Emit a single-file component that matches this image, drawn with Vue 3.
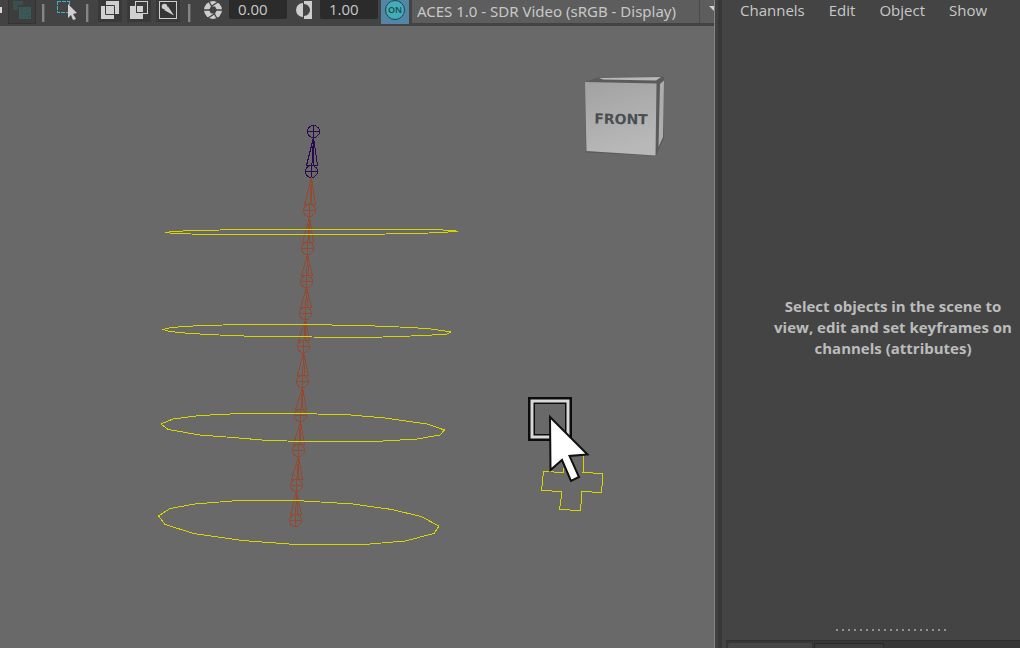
<script setup>
import { ref } from 'vue'

const exposure = ref('0.00')
const gamma = ref('1.00')
const view = ref('ACES 1.0 - SDR Video (sRGB - Display)')
const menus = ['Channels', 'Edit', 'Object', 'Show']

const joints = [
  [313.5, 131.5], [311.5, 171.5], [309.5, 210.5], [307.5, 248.5], [306.5, 281.5], [305.5, 313.5],
  [303.5, 346.5], [302.5, 381.5], [300.5, 415.5], [298.5, 450.5], [296.5, 485.5], [295.5, 520.5],
]

const jointPath = ([x, y]) =>
  `M${x - 6} ${y}a6 6 0 1 0 12 0a6 6 0 1 0 -12 0M${x - 6} ${y}H${x + 6}M${x} ${y - 6}V${y + 6}`

const bonePath = (i) => {
  const [x, y] = joints[i]
  const [tx, ty] = joints[i - 1]
  const base = y - 6
  const tip = `${tx} ${ty + 6}`
  return `M${tip}L${x - 5} ${base}H${x + 6}ZM${tip}L${x} ${y}M${tip}L${x + 2} ${base}`
}

const shapes = joints.map((j, i) => ({
  d: jointPath(j) + (i ? bonePath(i) : ''),
  end: i < 2,
}))

const rings = [
  '166,232.5 173,231.5 194,230.5 246,229.5 431,229.5 454,230.5 458,231.5 419,233.5 353,234.5 209,234.5 173,233.5',
  '163,329.5 171,327.5 200,325.5 246,324.5 304,324.5 359,325.5 390,326.5 427,328.5 442,330.5 451,332 447,334 432,335 400,336.5 366,337.5 258,336.5 229,335.5 190,333.5 170,331.5',
  '161,424 173,419 200,415.5 240,413.5 300,413.5 351,415 385,418 427,424 444.5,430 440,435 417,439 383,441 360,442 300,441.5 262,440 233,437.5 200,435 168,429.5',
  '158.5,516 170,508.5 195,504 238,500.5 296,500.5 353,504 392,509.5 421,516.5 439,526 434,533.5 405,541 364,544.5 296,544.5 242,540.5 194,533.5 165,524.5',
]
</script>

<template>
  <main class="app">
    <section class="viewport">
      <header class="toolbar">
        <span class="nub"></span>
        <button class="tool wide" aria-label="Wireframe shading">
          <svg width="28" height="24" viewBox="0 0 28 24">
            <path d="M5 1h10v4h-5v5H5z" fill="#3b4f4e" />
            <rect x="11" y="7" width="12" height="12" fill="#3c5959" />
            <path d="M13 9h1M17 10h1M20 9h1M14 13h1M18 14h1M21 13h1M13 17h1M17 17h1M20 17h1" stroke="#304544" />
          </svg>
        </button>
        <i class="sep first"></i>
        <button class="tool plain" aria-label="Isolate select">
          <svg width="24" height="22" viewBox="0 0 24 22">
            <path d="M3 1.500H15.500M3.500 1V12.500H14M15.500 1V5" fill="none" stroke="#3fb3c4" stroke-dasharray="4 1" />
            <path d="M14 4l9 9-4 1 3 5-3 1-2-5-3 3z" fill="#cfcfcf" />
          </svg>
        </button>
        <i class="sep"></i>
        <div class="group">
          <button class="tool" aria-label="X-ray">
            <svg width="24" height="22" viewBox="0 0 24 22">
              <path d="M8 1h13v13H8zM3 6h13v13H3z" fill="#d0d0d0" />
              <path d="M7.500 1V5.500H3M7.500 5.500H16.500V14.500H7.500zM16.500 14.500V19" fill="none" stroke="#3b3b3b" />
            </svg>
          </button>
          <button class="tool" aria-label="X-ray joints">
            <svg width="24" height="22" viewBox="0 0 24 22">
              <path d="M3 6h13v13H3z" fill="#d0d0d0" />
              <rect x="8.500" y="1.500" width="12" height="12" fill="#3b3b3b" stroke="#d0d0d0" />
              <rect x="10" y="6" width="6" height="6" fill="#d0d0d0" />
            </svg>
          </button>
          <button class="tool" aria-label="X-ray active components">
            <svg width="24" height="22" viewBox="0 0 24 22">
              <rect x="3.500" y="1.500" width="17" height="17" fill="#353535" stroke="#cdcdcd" />
              <circle cx="8.500" cy="6.500" r="2.800" fill="#cdcdcd" />
              <path d="M8 10L12 6.500 18 15.500z" fill="#cdcdcd" />
            </svg>
          </button>
        </div>
        <i class="sep"></i>
        <label class="ico" for="exposure">
          <svg width="20" height="20" viewBox="0 0 20 20" role="img" aria-label="Exposure">
            <circle cx="10" cy="10" r="9" fill="#cdcdcd" />
            <path d="M8 6.500L12 6.500L14 10L12 13.500L8 13.500L6 10z" fill="#414141" />
            <path d="M6 1.500L9 7M15 2L8 6.500M19 10H13M14 18.500L11 13M5 18L12 13.500M1 10H7" stroke="#414141" stroke-width="1.300" />
          </svg>
        </label>
        <input id="exposure" v-model="exposure" class="num" />
        <label class="ico gam" for="gamma">
          <svg width="20" height="20" viewBox="0 0 20 20" role="img" aria-label="Gamma">
            <path d="M10 1h8v18h-8v-3a6 6 0 0 0 0-12z" fill="#cdcdcd" />
            <path d="M9 3a7 7 0 0 0 0 14z" fill="#cdcdcd" />
          </svg>
        </label>
        <input id="gamma" v-model="gamma" class="num" />
        <button class="on" aria-label="Color management on"><span>ON</span></button>
        <div class="picker">
          <select v-model="view" aria-label="View transform">
            <option>ACES 1.0 - SDR Video (sRGB - Display)</option>
          </select>
          <svg class="caret" width="15" height="23" viewBox="0 0 15 23" aria-hidden="true">
            <path d="M.5 0V23" stroke="#4a4a4a" />
            <path d="M10 6h10l-5 5z" fill="#d0d0d0" />
          </svg>
        </div>
      </header>

      <svg class="scene" viewBox="0 26 714 622" preserveAspectRatio="xMidYMid slice">
        <defs>
          <linearGradient id="face" x1="0" y1="0" x2="0.3" y2="1">
            <stop offset="0" stop-color="#a2a2a2" />
            <stop offset="1" stop-color="#b8b8b8" />
          </linearGradient>
        </defs>
        <g class="wire bones">
          <path v-for="(s, i) in shapes" :key="i" :d="s.d" :class="{ end: s.end }" />
        </g>
        <g class="wire curves">
          <polygon v-for="(r, i) in rings" :key="i" :points="r" />
          <path d="M563.500 468V472.500L543.500 471.500L541.500 490.500L562 491.500L559.500 509.500L580.500 510.500L582 491.500L601.500 492.500L603 473.500L583 472.500L584 456" />
        </g>
        <g class="cube">
          <path d="M585 82L598 77.500L664 76.500V138L656 156L586 152.500z" fill="#5b5b5b" />
          <path d="M599 78L661 77L656 80.500L603 79.500z" fill="#b9b9b9" />
          <path d="M660 84L664 80.500L663 137L658.500 147z" fill="#adadad" />
          <path d="M585 82L656.500 83.500L655.500 155.500L586.500 151z" fill="url(#face)" />
          <text x="621" y="124" text-anchor="middle" transform="rotate(1 621 120)">FRONT</text>
        </g>
        <g class="pointer">
          <rect x="531.5" y="400.5" width="37" height="37" fill="none" stroke="#0c0c0c" stroke-width="7" />
          <rect x="532" y="401" width="36" height="36" fill="none" stroke="#d9d9d9" stroke-width="3" />
          <path d="M550 417L587.500 454.500L569.500 456L579 477L571 481L562 460L550.500 470z" fill="#fff" stroke="#111" stroke-width="2" />
        </g>
      </svg>
    </section>

    <div class="divider"></div>

    <aside class="panel">
      <nav class="menu">
        <button v-for="m in menus" :key="m">{{ m }}</button>
      </nav>
      <p class="hint">Select objects in the scene to<br />view, edit and set keyframes on<br />channels (attributes)</p>
      <div class="grip"><i v-for="n in 19" :key="n"></i></div>
      <div class="tabs"><span class="tab active"></span><span class="tab"></span></div>
    </aside>
  </main>
</template>

<style>
html, body { background: #444; }
</style>

<style scoped>
* { box-sizing: border-box; }
.app {
  display: grid;
  grid-template-columns: minmax(0, 1fr) 8px 298px;
  height: 100vh;
  overflow: hidden;
  background: #444;
  color: #c8c8c8;
  font: 15px/20px "Open Sans", "Noto Sans", sans-serif;
}
button, input, select { font: inherit; color: inherit; border: 0; margin: 0; padding: 0; background: none; }
svg { display: block; }
.viewport { display: flex; flex-direction: column; min-width: 0; min-height: 0; }
.toolbar { display: flex; align-items: flex-start; height: 26px; background: #434343; flex: none; overflow: hidden; }
.nub { width: 2px; height: 6px; margin: 7px 6px 0 0; background: #d6d6d6; flex: none; }
.tool { width: 24px; height: 22px; background: #393939; flex: none; }
.tool.wide { width: 28px; height: 24px; background: #3d3d3d; border: 1px solid #343434; border-top: 0; }
.tool.wide svg { margin-left: -1px; }
.tool.plain { background: none; }
.sep { width: 3px; height: 18px; margin: 4px 9px 0; background: #858585; flex: none; border-right: 1px solid #5c5c5c; }
.sep.first { margin: 4px 9px 0 6px; }
.sep + .tool.plain { margin-right: -1px; }
.group { display: flex; gap: 5px; flex: none; }
.group + .sep { margin-left: 8px; }
.sep + .ico { margin-left: 3px; }
.ico { width: 26px; flex: none; }
.ico.gam { width: 26px; margin-left: 7px; }
.num { width: 58px; height: 19px; padding-left: 9px; background: #2b2b2b; border-radius: 0 0 2px 2px; line-height: 19px; flex: none; }
.on { width: 28px; height: 24px; margin: 0 3px; padding: 0 4px 4px; background: #5285a6; flex: none; }
.on span {
  display: block; width: 20px; height: 20px; border: 1px solid #21464f; border-radius: 50%;
  background: #42adb7; color: #204750; font-size: 9px; line-height: 18px; text-align: center; font-weight: 600;
}
.picker { position: relative; flex: 1; min-width: 0; height: 23px; background: #5d5d5d; }
.picker select { appearance: none; width: 100%; height: 23px; padding-left: 5px; line-height: 23px; outline: 0; font-family: "Noto Sans", sans-serif; }
.caret { position: absolute; top: 0; right: 0; pointer-events: none; overflow: hidden; }
.scene { flex: 1; width: 100%; min-height: 0; background: #69696a; }
.wire { fill: none; stroke-width: 1; stroke-linejoin: round; shape-rendering: crispEdges; }
.bones path { stroke: #934a30; }
.bones .end { stroke: #2a0a4c; }
.curves { stroke: #d8d400; }
.cube text { font: bold 14px "DejaVu Sans", sans-serif; fill: #4a4d51; }
.divider { background: #373737; border-left: 1px solid #858585; box-shadow: inset 3px 0 0 #414141; }
.panel { display: flex; flex-direction: column; min-width: 0; }
.menu { display: flex; gap: 24px; padding-left: 18px; height: 22px; }
.menu button { line-height: 20px; height: 20px; }
.hint { flex: 1; margin: 4px 0 0 44px; display: grid; align-content: center; text-align: center; font-weight: bold; line-height: 21px; color: #bcbcbc; }
.grip { display: flex; gap: 4px; justify-content: center; height: 11px; padding-left: 39px; }
.grip i { width: 2px; height: 2px; background: #929292; }
.tabs { display: flex; gap: 2px; height: 8px; margin-left: 4px; padding: 2px 0 0 2px; background: #373737; border-top: 1px solid #303030; }
.tab { width: 70px; border: 1px solid #292929; border-bottom: 0; border-radius: 2px 2px 0 0; background: #3d3d3d; }
.tab.active { width: 84px; background: #464646; border-color: #464646; }
</style>
